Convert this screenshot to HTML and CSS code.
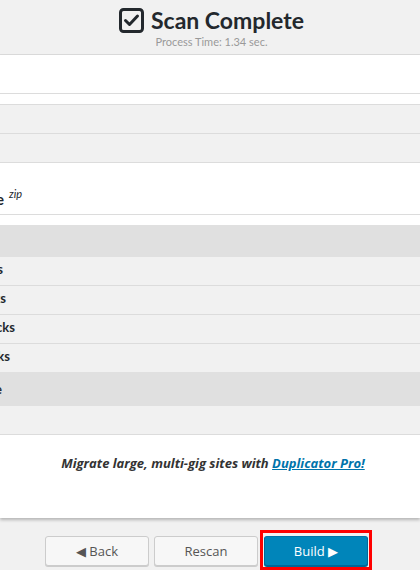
FILE: index.html
```html
<!DOCTYPE html>
<html>
<head>
<meta charset="utf-8">
<link rel="stylesheet" href="styles.css">
</head>
<body>
<div class="page">
  <header class="head">
    <h1 class="title">
      <svg class="chk" width="25" height="25" viewBox="0 0 25 25" aria-hidden="true">
        <rect x="1.5" y="1.5" width="22" height="22" rx="3" ry="3" fill="none" stroke="#23282d" stroke-width="3"/>
        <polyline points="6.5,12.5 10.5,16.5 18.5,8" fill="none" stroke="#23282d" stroke-width="3" stroke-linecap="round" stroke-linejoin="round"/>
      </svg>
      <span>Scan Complete</span>
    </h1>
    <div class="sub">Process Time: 1.34 sec.</div>
  </header>

  <div class="panel">
    <div class="blank tall"></div>
    <div class="blank short"></div>
    <div class="row grey"></div>
    <div class="row grey"></div>
    <div class="archive"><span class="lbl big end4">Archive</span><sup class="fmt">zip</sup></div>
    <div class="spacer"></div>
    <div class="sect"><span class="lbl end-hidden">Files</span></div>
    <div class="row grey"><span class="lbl end3">Size Checks</span></div>
    <div class="row grey"><span class="lbl end6">Name Checks</span></div>
    <div class="row grey"><span class="lbl end15">Read Checks</span></div>
    <div class="row grey noline"><span class="lbl end10">Links</span></div>
    <div class="sect tall"><span class="lbl end2">Database</span></div>
    <div class="row grey"></div>
    <div class="promo">
      <p>Migrate large, multi-gig sites with <a href="#">Duplicator Pro!</a></p>
    </div>
  </div>

  <div class="actions">
    <button class="btn">&#9664; Back</button>
    <button class="btn">Rescan</button>
    <span class="hl"><button class="btn primary">Build &#9654;</button></span>
  </div>
</div>
</body>
</html>
```
FILE: styles.css
```css
html, body {
  margin: 0;
  padding: 0;
  background: #f1f1f1;
  overflow: hidden;
}
body {
  width: 420px;
  height: 570px;
  font-family: Lato, "Open Sans", sans-serif;
  color: #23282d;
}
.head {
  box-sizing: border-box;
  height: 55px;
  border-bottom: 1px solid #dcdcdc;
  padding-top: 7px;
  text-align: center;
}
.title {
  margin: 0;
  display: flex;
  justify-content: center;
  align-items: center;
  gap: 7px;
  height: 26px;
  font-size: 23px;
  font-weight: 700;
  line-height: 26px;
  padding-left: 3px;
}
.chk { display: block; }
.sub {
  margin-top: 2px;
  font-size: 11px;
  line-height: 13px;
  color: #999;
  padding-left: 3px;
}
.panel {
  background: #fff;
  box-shadow: 0 2px 3px rgba(0,0,0,0.25);
}
.blank { border-bottom: 1px solid #dcdcdc; }
.blank.tall { height: 38px; }
.blank.short { height: 10px; }
.row {
  height: 28px;
  border-bottom: 1px solid #dcdcdc;
  display: flex;
  font-size: 13px;
  font-weight: 700;
  line-height: 24px;
  overflow: hidden;
}
.row.grey { background: #f1f1f1; }
.row.noline { border-bottom: 0; }
.archive {
  box-sizing: border-box;
  height: 52px;
  border-bottom: 1px solid #dcdcdc;
  display: flex;
  align-items: flex-end;
  padding-bottom: 6px;
  overflow: hidden;
}
.lbl {
  flex: none;
  width: 200px;
  text-align: right;
  white-space: nowrap;
  font-weight: 700;
}
.big { font-size: 15px; line-height: 18px; }
.fmt {
  font-size: 11px;
  font-style: italic;
  font-weight: 400;
  margin-left: 5px;
  align-self: flex-start;
  margin-top: 24px;
  color: #23282d;
}
.end2 { margin-left: -198px; }
.end3 { margin-left: -197px; }
.end4 { margin-left: -196px; }
.end6 { margin-left: -194px; }
.end10 { margin-left: -190px; }
.end15 { margin-left: -185px; }
.end-hidden { margin-left: -210px; }
.spacer { height: 10px; }
.sect {
  height: 32px;
  background: #e0e0e0;
  display: flex;
  overflow: hidden;
  font-size: 13px;
  line-height: 30px;
}
.sect.tall { height: 34px; line-height: 34px; }
.promo {
  box-sizing: border-box;
  height: 83px;
  padding-top: 19px;
  text-align: center;
}
.promo p {
  margin: 0;
  font-family: "Open Sans", Lato, sans-serif;
  font-size: 13px;
  font-weight: 700;
  font-style: italic;
  color: #333;
  padding-left: 6px;
}
.promo a { color: #0073aa; }
.actions {
  display: flex;
  align-items: flex-start;
  gap: 5px;
  padding: 18px 0 0 45px;
}
.btn {
  width: 104px;
  height: 30px;
  box-sizing: border-box;
  border: 1px solid #ccc;
  border-radius: 3px;
  background: #f7f7f7;
  box-shadow: 0 1px 0 #ccc;
  color: #555;
  font-family: "Open Sans", Lato, sans-serif;
  font-size: 13px;
  padding: 0;
}
.hl {
  display: block;
  margin: -6px 0 0 -3px;
  padding: 3px 1px 1px 1px;
  border: 3px solid #f00;
}
.btn.primary {
  display: block;
  background: #0085ba;
  border-color: #0073aa #006799 #006799;
  box-shadow: 0 1px 0 #006799;
  color: #fff;
}
```
